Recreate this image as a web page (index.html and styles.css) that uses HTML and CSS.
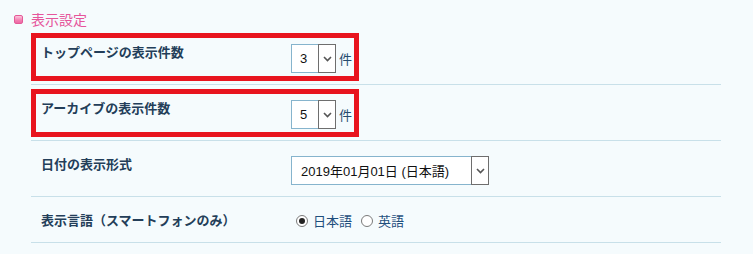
FILE: index.html
```html
<!DOCTYPE html>
<html lang="ja">
<head>
<meta charset="utf-8">
<title>表示設定</title>
<link rel="stylesheet" href="styles.css">
</head>
<body>
<div class="panel">
  <h2 class="heading"><span class="heading-icon"></span>表示設定</h2>
  <div class="rows">
    <div class="row">
      <div class="row-inner is-marked">
        <div class="label">トップページの表示件数</div>
        <div class="value">
          <div class="select select-small"><span class="select-text">3</span><span class="select-btn"><svg width="9" height="6" viewBox="0 0 9 6"><path d="M1 1 L4.5 4.5 L8 1" fill="none" stroke="#555" stroke-width="1.6"/></svg></span></div>
          <span class="unit">件</span>
        </div>
      </div>
    </div>
    <div class="row">
      <div class="row-inner is-marked">
        <div class="label">アーカイブの表示件数</div>
        <div class="value">
          <div class="select select-small"><span class="select-text">5</span><span class="select-btn"><svg width="9" height="6" viewBox="0 0 9 6"><path d="M1 1 L4.5 4.5 L8 1" fill="none" stroke="#555" stroke-width="1.6"/></svg></span></div>
          <span class="unit">件</span>
        </div>
      </div>
    </div>
    <div class="row">
      <div class="row-inner">
        <div class="label">日付の表示形式</div>
        <div class="value">
          <div class="select select-wide"><span class="select-text">2019年01月01日 (日本語)</span><span class="select-btn"><svg width="9" height="6" viewBox="0 0 9 6"><path d="M1 1 L4.5 4.5 L8 1" fill="none" stroke="#555" stroke-width="1.6"/></svg></span></div>
        </div>
      </div>
    </div>
    <div class="row">
      <div class="row-inner row-short">
        <div class="label">表示言語（スマートフォンのみ）</div>
        <div class="value radios">
          <label class="radio"><span class="radio-dot is-checked"></span>日本語</label>
          <label class="radio"><span class="radio-dot"></span>英語</label>
        </div>
      </div>
    </div>
  </div>
</div>
</body>
</html>
```

FILE: styles.css
```css
html, body {
  margin: 0;
  padding: 0;
  background: #f5fbfd;
}
body {
  width: 753px;
  height: 254px;
  overflow: hidden;
  font-family: "Noto Sans CJK JP", "Liberation Sans", sans-serif;
}
.panel {
  padding: 0;
}
.heading {
  margin: 0;
  padding: 9px 0 0 14px;
  height: 20px;
  display: flex;
  align-items: center;
  gap: 8px;
  font-size: 14px;
  line-height: 20px;
  font-weight: normal;
  color: #e6559b;
}
.heading-icon {
  width: 7px;
  height: 7px;
  border: 1px solid #e45a98;
  border-radius: 2px;
  background: linear-gradient(180deg, #fcc6dd 0%, #f47fb2 60%, #ec6aa4 100%);
}
.rows {
  margin-left: 31px;
  width: 690px;
}
.row {
  padding: 4px 0 3px;
  border-bottom: 1px solid #c8e0e9;
}
.row-inner {
  display: flex;
  align-items: flex-start;
  border: 5px solid transparent;
  height: 38px;
  box-sizing: content-box;
}
.row-inner.is-marked {
  border-color: #e8141e;
  width: 318px;
}
.row-inner.row-short {
  height: 28px;
}
.label {
  width: 250px;
  padding: 5px 0 0 5px;
  font-size: 13px;
  line-height: 17px;
  font-weight: bold;
  color: #233e59;
}
.value {
  display: flex;
  align-items: center;
  padding-top: 6px;
}
.select {
  display: flex;
  height: 27px;
  border: 1px solid #86b4cd;
  background: #fff;
}
.select-small {
  width: 43px;
}
.select-wide {
  width: 196px;
}
.select-text {
  flex: 1;
  display: flex;
  align-items: center;
  padding-left: 8px;
  font-family: "Liberation Sans", "Noto Sans CJK JP", sans-serif;
  font-size: 13px;
  color: #111;
}
.select-wide .select-text {
  padding-left: 9px;
}
.select-btn {
  width: 16px;
  border: 1px solid #6e6e6e;
  margin: -1px -1px -1px 0;
  height: 27px;
  display: flex;
  align-items: center;
  justify-content: center;
  background: #fff;
}
.unit {
  margin-left: 3px;
  font-size: 13px;
  color: #244a6e;
}
.radios {
  padding-top: 6px;
  gap: 9px;
}
.radio {
  display: flex;
  align-items: center;
  gap: 5px;
  font-size: 13px;
  line-height: 17px;
  color: #1f4f7d;
  margin-left: 5px;
}
.radio + .radio {
  margin-left: 0;
}
.radio-dot {
  width: 10px;
  height: 10px;
  border: 1px solid #7a7a7a;
  border-radius: 50%;
  background: #fff;
  position: relative;
}
.radio-dot.is-checked::after {
  content: "";
  position: absolute;
  left: 2px;
  top: 2px;
  width: 6px;
  height: 6px;
  border-radius: 50%;
  background: #222;
}
```
